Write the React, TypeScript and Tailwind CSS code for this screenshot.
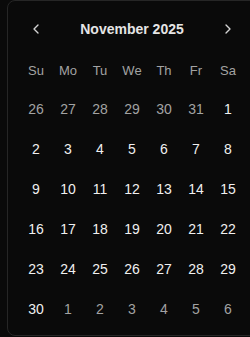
const weekdays = ["Su", "Mo", "Tu", "We", "Th", "Fr", "Sa"];

type Day = { n: number; outside: boolean };

function buildDays(): Day[] {
  const days: Day[] = [];
  for (let n = 26; n <= 31; n++) days.push({ n, outside: true });
  for (let n = 1; n <= 30; n++) days.push({ n, outside: false });
  for (let n = 1; n <= 6; n++) days.push({ n, outside: true });
  return days;
}

function Chevron({ dir }: { dir: "left" | "right" }) {
  return (
    <svg width="16" height="16" viewBox="0 0 24 24" fill="none" stroke="currentColor" strokeWidth="2" strokeLinecap="round" strokeLinejoin="round">
      {dir === "left" ? <path d="m15 18-6-6 6-6" /> : <path d="m9 18 6-6-6-6" />}
    </svg>
  );
}

export default function App() {
  const days = buildDays();
  return (
    <div className="w-[250px] h-[337px] overflow-hidden bg-[#0a0a0a] font-['Liberation_Sans',Arial,sans-serif]">
      <div className="ml-[7px] w-[260px] h-[336px] rounded-lg border border-[#262626] bg-[#0a0a0a] pt-3 pl-3">
        <div className="w-[224px] h-8 flex items-center">
          <button className="w-8 h-8 flex items-center justify-center text-[#d4d4d4]">
            <Chevron dir="left" />
          </button>
          <div className="flex-1 text-center text-sm font-bold text-[#e5e5e5]">November 2025</div>
          <button className="w-8 h-8 flex items-center justify-center text-[#d4d4d4]">
            <Chevron dir="right" />
          </button>
        </div>
        <div className="mt-4 grid grid-cols-7 w-[224px]">
          {weekdays.map((d) => (
            <div key={d} className="h-5 flex items-center justify-center text-[13px] text-[#a3a3a3]">{d}</div>
          ))}
        </div>
        <div className="mt-2 grid grid-cols-7 w-[224px]">
          {days.map((d, i) => (
            <div key={i} className={`h-10 flex items-center justify-center text-sm ${d.outside ? "text-[#a3a3a3]" : "text-[#f0f0f0]"}`}>
              {d.n}
            </div>
          ))}
        </div>
      </div>
    </div>
  );
}
